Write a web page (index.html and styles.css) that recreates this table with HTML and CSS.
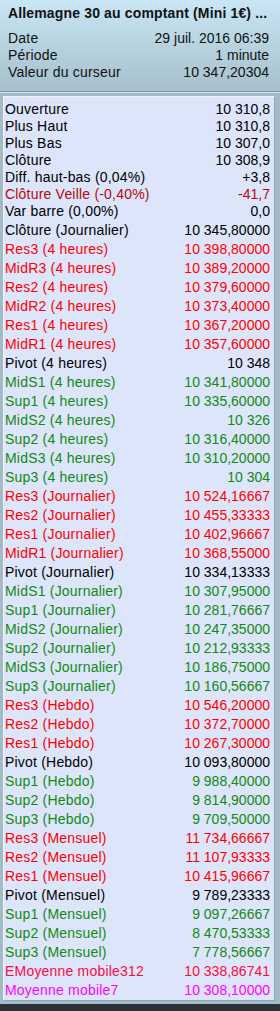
FILE: index.html
```html
<!DOCTYPE html>
<html lang="fr">
<head>
<meta charset="utf-8">
<link rel="stylesheet" href="styles.css">
</head>
<body>
<div class="app">
  <div class="header">
    <div class="title">Allemagne 30 au comptant (Mini 1€) ...</div>
    <div class="info">
      <div class="row"><span>Date</span><span>29 juil. 2016 06:39</span></div>
      <div class="row"><span>Période</span><span>1 minute</span></div>
      <div class="row"><span>Valeur du curseur</span><span>10 347,20304</span></div>
    </div>
  </div>
  <div class="panel">
    <div class="box">
      <div class="group1">
        <div class="row"><span>Ouverture</span><span>10 310,8</span></div>
        <div class="row"><span>Plus Haut</span><span>10 310,8</span></div>
        <div class="row"><span>Plus Bas</span><span>10 307,0</span></div>
        <div class="row"><span>Clôture</span><span>10 308,9</span></div>
        <div class="row"><span>Diff. haut-bas (0,04%)</span><span>+3,8</span></div>
        <div class="row dred"><span>Clôture Veille (-0,40%)</span><span>-41,7</span></div>
        <div class="row"><span>Var barre (0,00%)</span><span>0,0</span></div>
      </div>
      <div class="group2">
        <div class="row"><span>Clôture (Journalier)</span><span>10 345,80000</span></div>
        <div class="row red"><span>Res3 (4 heures)</span><span>10 398,80000</span></div>
        <div class="row red"><span>MidR3 (4 heures)</span><span>10 389,20000</span></div>
        <div class="row red"><span>Res2 (4 heures)</span><span>10 379,60000</span></div>
        <div class="row red"><span>MidR2 (4 heures)</span><span>10 373,40000</span></div>
        <div class="row red"><span>Res1 (4 heures)</span><span>10 367,20000</span></div>
        <div class="row red"><span>MidR1 (4 heures)</span><span>10 357,60000</span></div>
        <div class="row"><span>Pivot (4 heures)</span><span>10 348</span></div>
        <div class="row green"><span>MidS1 (4 heures)</span><span>10 341,80000</span></div>
        <div class="row green"><span>Sup1 (4 heures)</span><span>10 335,60000</span></div>
        <div class="row green"><span>MidS2 (4 heures)</span><span>10 326</span></div>
        <div class="row green"><span>Sup2 (4 heures)</span><span>10 316,40000</span></div>
        <div class="row green"><span>MidS3 (4 heures)</span><span>10 310,20000</span></div>
        <div class="row green"><span>Sup3 (4 heures)</span><span>10 304</span></div>
        <div class="row red"><span>Res3 (Journalier)</span><span>10 524,16667</span></div>
        <div class="row red"><span>Res2 (Journalier)</span><span>10 455,33333</span></div>
        <div class="row red"><span>Res1 (Journalier)</span><span>10 402,96667</span></div>
        <div class="row red"><span>MidR1 (Journalier)</span><span>10 368,55000</span></div>
        <div class="row"><span>Pivot (Journalier)</span><span>10 334,13333</span></div>
        <div class="row green"><span>MidS1 (Journalier)</span><span>10 307,95000</span></div>
        <div class="row green"><span>Sup1 (Journalier)</span><span>10 281,76667</span></div>
        <div class="row green"><span>MidS2 (Journalier)</span><span>10 247,35000</span></div>
        <div class="row green"><span>Sup2 (Journalier)</span><span>10 212,93333</span></div>
        <div class="row green"><span>MidS3 (Journalier)</span><span>10 186,75000</span></div>
        <div class="row green"><span>Sup3 (Journalier)</span><span>10 160,56667</span></div>
        <div class="row red"><span>Res3 (Hebdo)</span><span>10 546,20000</span></div>
        <div class="row red"><span>Res2 (Hebdo)</span><span>10 372,70000</span></div>
        <div class="row red"><span>Res1 (Hebdo)</span><span>10 267,30000</span></div>
        <div class="row"><span>Pivot (Hebdo)</span><span>10 093,80000</span></div>
        <div class="row green"><span>Sup1 (Hebdo)</span><span>9 988,40000</span></div>
        <div class="row green"><span>Sup2 (Hebdo)</span><span>9 814,90000</span></div>
        <div class="row green"><span>Sup3 (Hebdo)</span><span>9 709,50000</span></div>
        <div class="row red"><span>Res3 (Mensuel)</span><span>11 734,66667</span></div>
        <div class="row red"><span>Res2 (Mensuel)</span><span>11 107,93333</span></div>
        <div class="row red"><span>Res1 (Mensuel)</span><span>10 415,96667</span></div>
        <div class="row"><span>Pivot (Mensuel)</span><span>9 789,23333</span></div>
        <div class="row green"><span>Sup1 (Mensuel)</span><span>9 097,26667</span></div>
        <div class="row green"><span>Sup2 (Mensuel)</span><span>8 470,53333</span></div>
        <div class="row green"><span>Sup3 (Mensuel)</span><span>7 778,56667</span></div>
        <div class="row crimson"><span>EMoyenne mobile312</span><span>10 338,86741</span></div>
        <div class="row magenta"><span>Moyenne mobile7</span><span>10 308,10000</span></div>
      </div>
    </div>
  </div>
  <div class="footer"></div>
</div>
</body>
</html>
```

FILE: styles.css
```css
html, body {
  margin: 0;
  padding: 0;
}
body {
  width: 280px;
  height: 1011px;
  overflow: hidden;
  font-family: "Liberation Sans", Arial, sans-serif;
  font-size: 14px;
  color: #000;
  background: #2b3137;
}
.app {
  display: flex;
  flex-direction: column;
  height: 1011px;
}
.header {
  height: 92px;
  box-sizing: border-box;
  padding: 5px 11px 0 8px;
  background: linear-gradient(#c9e6f4, #a6c0cc);
  border-bottom: 1px solid #7c97a3;
  color: #111;
}
.title {
  font-weight: bold;
  line-height: 17px;
  height: 17px;
  white-space: nowrap;
  letter-spacing: 0.15px;
}
.info {
  margin-top: 8px;
}
.row {
  display: flex;
  justify-content: space-between;
  white-space: nowrap;
}
.row span:first-child {
  letter-spacing: 0.2px;
}
.info .row {
  line-height: 17px;
  height: 17px;
}
.panel {
  background: #a3bbc7;
  border-top: 1px solid #d3e2e9;
  padding: 3px 5px 3px 3px;
}
.box {
  background: #dce5fa;
  border: 1px solid #eef3fc;
  border-right-color: #8fa6b4;
  border-bottom-color: #8fa6b4;
  padding: 4px 4px 0 1px;
  height: 905px;
  box-sizing: border-box;
}
.group1 .row {
  height: 17px;
  line-height: 17px;
}
.group2 {
  margin-top: 1px;
}
.group2 .row {
  height: 19px;
  line-height: 19px;
}
.red { color: #ff0000; }
.dred { color: #b40a0a; }
.green { color: #128a12; }
.crimson { color: #ff0a3c; }
.magenta { color: #ff00ff; }
.footer {
  flex: 1;
  background: #2b3137;
}
```
